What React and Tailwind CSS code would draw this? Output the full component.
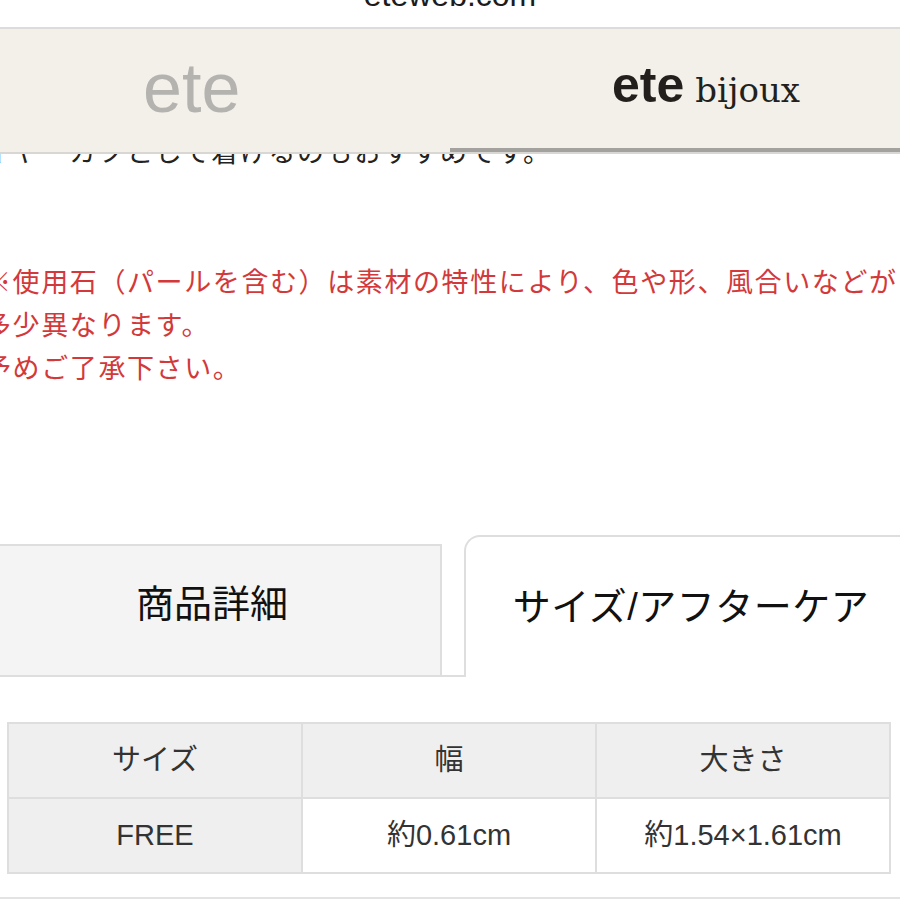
import React from 'react';

const sizeRows = [
  ['サイズ', '幅', '大きさ'],
  ['FREE', '約0.61cm', '約1.54×1.61cm'],
];

const App = () => {
  return (
    <div className="w-[900px] h-[900px] overflow-hidden bg-white font-['Liberation_Sans','Noto_Sans_CJK_JP',sans-serif]">
      {/* url bar, scrolled mostly out of view */}
      <div className="h-[29px] overflow-hidden border-b-2 border-[#dcdcdc]">
        <p className="-mt-[21px] text-center text-[32px] leading-none text-[#1c1c1c]">eteweb.com</p>
      </div>

      {/* brand switcher */}
      <div className="flex h-[125px] bg-[#f3f0ea] border-b-2 border-[#d9d7d3]">
        <div className="w-[450px] pl-[143px] pt-[24px]">
          <span className="text-[70px] leading-none text-[#b5b3b0]">ete</span>
        </div>
        <div className="w-[450px] flex items-baseline pl-[162px] pt-[31px] border-b-4 border-[#a4a29f]">
          <span className="text-[50px] font-bold leading-none text-[#231f1c]">ete</span>
          <span className="ml-[11px] text-[34px] leading-none text-[#231f1c] font-['DejaVu_Serif',serif]">bijoux</span>
        </div>
      </div>

      {/* line hidden behind the sticky header */}
      <div className="h-[14px] overflow-hidden">
        <p className="-mt-[22px] -ml-[16px] text-[27px] leading-[43px] tracking-[1.6px] text-[#222] whitespace-nowrap">
          イヤーカフとして着けるのもおすすめです。
        </p>
      </div>

      {/* notice */}
      <div className="mt-[94px] -ml-[16px] text-[27px] leading-[43px] tracking-[1.6px] text-[#d3393a] whitespace-nowrap">
        <p>※使用石（パールを含む）は素材の特性により、色や形、風合いなどが</p>
        <p>多少異なります。</p>
        <p>予めご了承下さい。</p>
      </div>

      {/* tabs */}
      <div className="mt-[144px] -ml-[16px] w-[932px] flex items-end">
        <div className="w-[458px] h-[133px] flex items-center justify-center pb-[12px] bg-[#f4f4f4] border-t-2 border-r-2 border-b-2 border-[#dedede]">
          <span className="text-[38px] text-[#111]">商品詳細</span>
        </div>
        <div className="w-[22px] h-[2px] bg-[#dedede]" />
        <div className="flex-1 h-[142px] flex items-center justify-center bg-white border-t-2 border-l-2 border-[#dedede] rounded-tl-[16px]">
          <span className="text-[38px] tracking-[0.5px] text-[#111]">サイズ/アフターケア</span>
        </div>
      </div>

      {/* size table */}
      <div className="mt-[45px] ml-[7px] w-[884px] grid grid-cols-3 border-t-2 border-l-2 border-[#dedede]">
        {sizeRows.map((row, r) =>
          row.map((cell, c) => (
            <div
              key={`${r}-${c}`}
              className={`h-[75px] flex items-center justify-center border-r-2 border-b-2 border-[#dedede] text-[29px] text-[#333] ${r === 0 || c === 0 ? 'bg-[#efefef]' : 'bg-white'}`}
            >
              {cell}
            </div>
          ))
        )}
      </div>

      <div className="mt-[23px] h-[2px] bg-[#e3e3e3]" />
    </div>
  );
};

export default App;
